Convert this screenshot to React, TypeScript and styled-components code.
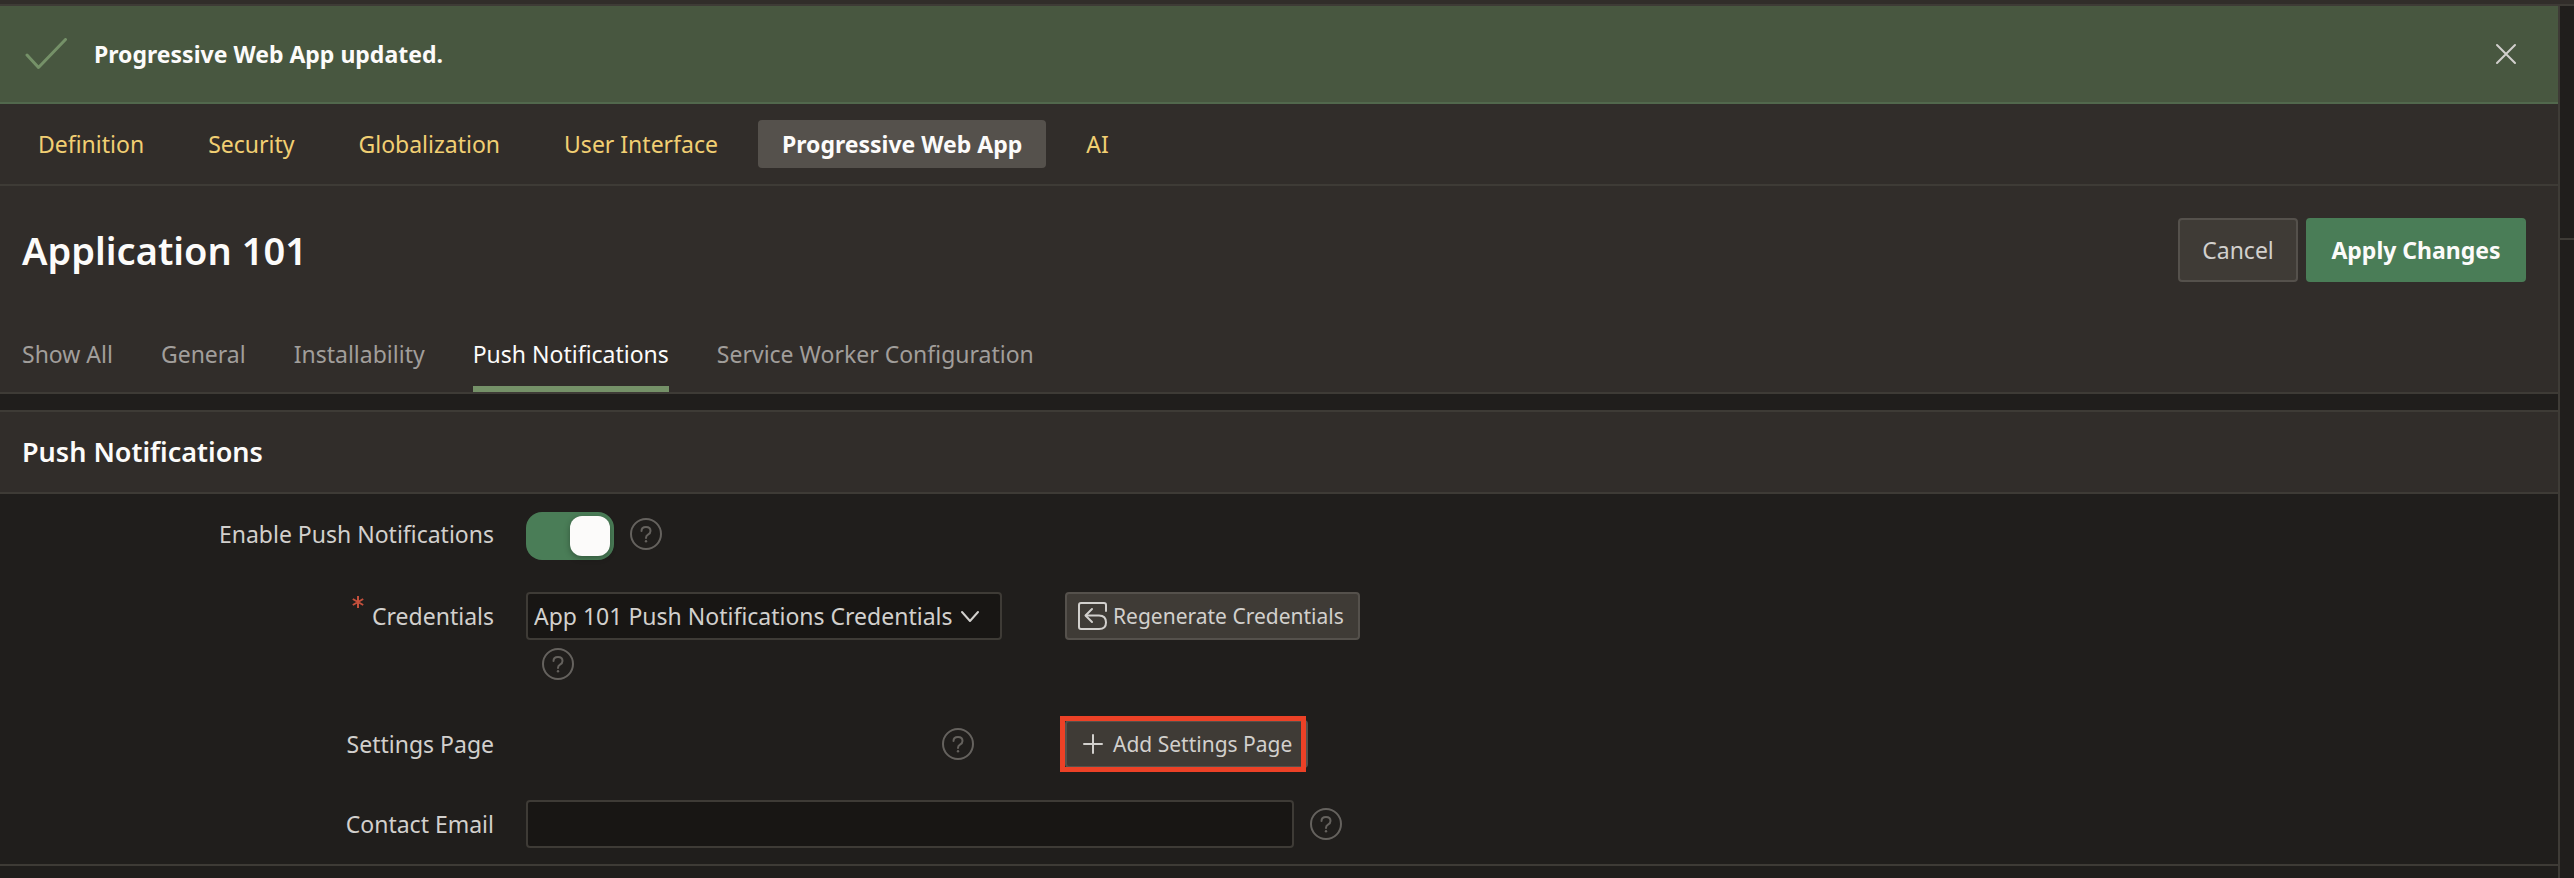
import React, { useState } from "react";
import styled, { createGlobalStyle, css } from "styled-components";

const color = {
  page: "#201e1c",
  panel: "#312d2a",
  line: "#3e3b36",
  field: "#181614",
  button: "#3f3b36",
  buttonLine: "#55514c",
  text: "#d2d0cd",
  strong: "#fcfbfa",
  muted: "#a19e9b",
  faint: "#65625e",
  green: "#4a7d57",
  leaf: "#759168",
  banner: "#485740",
  bannerLine: "#52684d",
  link: "#f1cf73",
  danger: "#c4503c",
  mark: "#ec4126",
};

const GlobalStyle = createGlobalStyle`
  *, *::before, *::after { box-sizing: border-box; }
  body {
    margin: 0;
    background: ${color.page};
    color: ${color.text};
    font-family: "Noto Sans", "Open Sans", sans-serif;
    font-size: 23px;
    line-height: 32px;
  }
  button, input, select { font: inherit; color: inherit; }
  h1, h2, p { margin: 0; }
`;

const Page = styled.div`
  display: flex;
  flex-direction: column;
  min-height: 100vh;
`;

const TopStrip = styled.div`
  height: 6px;
  background: ${color.panel};
  border-bottom: 2px solid ${color.line};
`;

const Body = styled.div`
  display: flex;
  flex: 1;
`;

const Main = styled.main`
  flex: 1;
  min-width: 0;
  border-right: 2px solid ${color.line};
`;

const SidePane = styled.aside`
  flex: 0 0 14px;
`;

const SideHeader = styled.div`
  height: 234px;
  border-bottom: 2px solid ${color.line};
`;

const Banner = styled.div`
  display: flex;
  align-items: center;
  padding: 32px 32px 32px 24px;
  background: ${color.banner};
  border-bottom: 2px solid ${color.bannerLine};
`;

const BannerText = styled.p`
  flex: 1;
  padding-left: 24px;
  color: ${color.strong};
  font-weight: 700;
`;

const IconButton = styled.button`
  display: flex;
  align-items: center;
  justify-content: center;
  width: 40px;
  height: 32px;
  padding: 0;
  border: 0;
  background: none;
  color: ${color.text};
`;

const SectionNav = styled.nav`
  display: flex;
  gap: 16px;
  padding: 16px 14px;
  background: ${color.panel};
  border-bottom: 2px solid ${color.line};
`;

const SectionLink = styled.a<{ $current?: boolean }>`
  padding: 8px 24px;
  border-radius: 4px;
  color: ${color.link};
  text-decoration: none;
  ${(p) =>
    p.$current &&
    css`
      background: ${color.buttonLine};
      color: ${color.strong};
      font-weight: 700;
    `}
`;

const Header = styled.header`
  background: ${color.panel};
  border-bottom: 2px solid ${color.line};
`;

const TitleBar = styled.div`
  display: flex;
  align-items: center;
  gap: 8px;
  padding: 32px 32px 40px 22px;
`;

const Title = styled.h1`
  flex: 1;
  color: ${color.strong};
  font-size: 38px;
  font-weight: 600;
  line-height: 48px;
`;

const ActionButton = styled.button<{ $primary?: boolean }>`
  min-width: ${(p) => (p.$primary ? 220 : 120)}px;
  height: 64px;
  padding: 0 22px;
  border: 2px solid ${(p) => (p.$primary ? color.green : color.buttonLine)};
  border-radius: 4px;
  background: ${(p) => (p.$primary ? color.green : color.button)};
  color: ${(p) => (p.$primary ? color.strong : color.text)};
  font-weight: ${(p) => (p.$primary ? 700 : 400)};
`;

const Tabs = styled.nav`
  display: flex;
  gap: 48px;
  padding: 0 22px;
`;

const Tab = styled.a<{ $current?: boolean }>`
  padding: 16px 0;
  border-bottom: 6px solid ${(p) => (p.$current ? color.leaf : "transparent")};
  color: ${(p) => (p.$current ? color.strong : color.muted)};
  text-decoration: none;
`;

const Region = styled.section`
  margin-top: 16px;
  border-top: 2px solid ${color.line};
  border-bottom: 2px solid ${color.line};
`;

const RegionTitle = styled.h2`
  padding: 22px;
  background: ${color.panel};
  border-bottom: 2px solid ${color.line};
  color: ${color.strong};
  font-size: 27px;
  font-weight: 600;
  line-height: 36px;
`;

const Form = styled.form`
  display: flex;
  flex-direction: column;
  gap: 32px;
  padding: 16px 0;
`;

const FieldRow = styled.div`
  display: flex;
  align-items: flex-start;
`;

const LabelCell = styled.div`
  display: flex;
  justify-content: flex-end;
  flex: 0 0 526px;
  padding: 8px 32px 8px 0;
`;

const Required = styled.span`
  display: flex;
  margin-top: -4px;
  padding-right: 8px;
`;

const FieldCell = styled.div<{ $column?: boolean }>`
  display: flex;
  flex-wrap: wrap;
  align-items: flex-start;
  flex: 0 0 auto;
  ${(p) =>
    p.$column &&
    css`
      flex-basis: 523px;
      margin-right: 16px;
    `}
`;

const Toggle = styled.input`
  appearance: none;
  display: flex;
  justify-content: flex-end;
  width: 88px;
  height: 48px;
  margin: 2px 0 0;
  padding: 4px;
  border-radius: 16px;
  background: ${color.green};
  &:not(:checked) {
    justify-content: flex-start;
    background: ${color.buttonLine};
  }
  &::before {
    content: "";
    width: 40px;
    height: 40px;
    border-radius: 12px;
    background: ${color.strong};
    box-shadow: 0 2px 6px rgba(0, 0, 0, 0.3);
  }
`;

const SelectBox = styled.div`
  position: relative;
`;

const Select = styled.select`
  appearance: none;
  display: block;
  width: 476px;
  height: 48px;
  padding: 0 48px 0 6px;
  border: 2px solid ${color.line};
  border-radius: 4px;
  background: ${color.field};
`;

const Chevron = styled.svg`
  position: absolute;
  top: 18px;
  right: 22px;
  pointer-events: none;
`;

const DisplayValue = styled.output`
  width: 400px;
  height: 48px;
`;

const TextInput = styled.input`
  width: 768px;
  height: 48px;
  padding: 0 14px;
  border: 2px solid ${color.line};
  border-radius: 4px;
  background: ${color.field};
`;

const HelpButton = styled.button`
  display: flex;
  margin: 8px 0 8px 16px;
  padding: 0;
  border: 0;
  background: none;
  color: ${color.faint};
`;

const SmallButton = styled.button`
  display: flex;
  align-items: center;
  gap: 4px;
  height: 48px;
  padding: 0 14px 0 10px;
  border: 2px solid ${color.buttonLine};
  border-radius: 4px;
  background: ${color.button};
  font-size: 21px;
`;

const Highlight = styled.div`
  position: relative;
  &::after {
    content: "";
    position: absolute;
    inset: -4px 2px -4px -5px;
    border: 5px solid ${color.mark};
    pointer-events: none;
  }
`;

function CheckIcon() {
  return (
    <svg width="46" height="32" viewBox="0 0 46 32" fill="none" stroke={color.leaf} strokeWidth="3" strokeLinecap="round" strokeLinejoin="round">
      <path d="M3 17 L14.500 29.500 L41.500 1.500" />
    </svg>
  );
}

function CloseIcon() {
  return (
    <svg width="24" height="24" viewBox="0 0 24 24" fill="none" stroke="currentColor" strokeWidth="2" strokeLinecap="round">
      <path d="M3 3 L21 21 M21 3 L3 21" />
    </svg>
  );
}

function AsteriskIcon() {
  return (
    <svg width="12" height="12" viewBox="0 0 12 12" fill="none" stroke={color.danger} strokeWidth="2" aria-hidden="true">
      <path d="M6 0 V12 M0.8 3 L11.2 9 M11.2 3 L0.8 9" />
    </svg>
  );
}

function RegenerateIcon() {
  return (
    <svg width="32" height="32" viewBox="0 0 32 32" fill="none" stroke="currentColor" strokeWidth="2" strokeLinecap="round" strokeLinejoin="round">
      <path d="M29 11 V5 Q29 3 27 3 H4 Q2 3 2 5 V27 Q2 29 4 29 H22 Q29 29 29 22.500 Q29 15.500 22 15.500 H9" />
      <path d="M15 9 L8.500 15.500 L15 22" />
    </svg>
  );
}

function PlusIcon() {
  return (
    <svg width="32" height="32" viewBox="0 0 32 32" fill="none" stroke="currentColor" strokeWidth="2" strokeLinecap="round">
      <path d="M16 7 V25 M7 16 H25" />
    </svg>
  );
}

function Help({ topic }: { topic: string }) {
  return (
    <HelpButton type="button" aria-label={`Help: ${topic}`}>
      <svg width="32" height="32" viewBox="0 0 32 32" fill="none" stroke="currentColor" strokeWidth="2">
        <circle cx="16" cy="16" r="15" />
        <path d="M11.500 13 Q11.500 9 16 9 Q20.500 9 20.500 13 Q20.500 15.300 18 16.600 Q16 17.700 16 20" strokeLinecap="round" />
        <circle cx="16" cy="23.300" r="1.200" fill="currentColor" stroke="none" />
      </svg>
    </HelpButton>
  );
}

const sections = ["Definition", "Security", "Globalization", "User Interface", "Progressive Web App", "AI"];
const tabs = ["Show All", "General", "Installability", "Push Notifications", "Service Worker Configuration"];

export default function App() {
  const [enabled, setEnabled] = useState(true);
  const [email, setEmail] = useState("");

  return (
    <>
      <GlobalStyle />
      <Page>
        <TopStrip />
        <Body>
          <Main>
            <Banner role="status">
              <CheckIcon />
              <BannerText>Progressive Web App updated.</BannerText>
              <IconButton type="button" aria-label="Close">
                <CloseIcon />
              </IconButton>
            </Banner>

            <SectionNav>
              {sections.map((name) => (
                <SectionLink key={name} href="#" $current={name === "Progressive Web App"}>
                  {name}
                </SectionLink>
              ))}
            </SectionNav>

            <Header>
              <TitleBar>
                <Title>Application 101</Title>
                <ActionButton type="button">Cancel</ActionButton>
                <ActionButton type="button" $primary>
                  Apply Changes
                </ActionButton>
              </TitleBar>
              <Tabs>
                {tabs.map((name) => (
                  <Tab key={name} href="#" $current={name === "Push Notifications"}>
                    {name}
                  </Tab>
                ))}
              </Tabs>
            </Header>

            <Region>
              <RegionTitle>Push Notifications</RegionTitle>
              <Form>
                <FieldRow>
                  <LabelCell>
                    <label htmlFor="enable-push">Enable Push Notifications</label>
                  </LabelCell>
                  <FieldCell>
                    <Toggle
                      id="enable-push"
                      type="checkbox"
                      checked={enabled}
                      onChange={(e) => setEnabled(e.target.checked)}
                    />
                    <Help topic="Enable Push Notifications" />
                  </FieldCell>
                </FieldRow>

                <FieldRow>
                  <LabelCell>
                    <Required>
                      <AsteriskIcon />
                    </Required>
                    <label htmlFor="credentials">Credentials</label>
                  </LabelCell>
                  <FieldCell $column>
                    <SelectBox>
                      <Select id="credentials">
                        <option>App 101 Push Notifications Credentials</option>
                      </Select>
                      <Chevron width="20" height="14" viewBox="0 0 20 14" fill="none" stroke="currentColor" strokeWidth="2" strokeLinecap="round" strokeLinejoin="round">
                        <path d="M2 2 L10 11 L18 2" />
                      </Chevron>
                    </SelectBox>
                    <Help topic="Credentials" />
                  </FieldCell>
                  <SmallButton type="button">
                    <RegenerateIcon />
                    Regenerate Credentials
                  </SmallButton>
                </FieldRow>

                <FieldRow>
                  <LabelCell>
                    <label htmlFor="settings-page">Settings Page</label>
                  </LabelCell>
                  <FieldCell $column>
                    <DisplayValue id="settings-page" />
                    <Help topic="Settings Page" />
                  </FieldCell>
                  <Highlight>
                    <SmallButton type="button">
                      <PlusIcon />
                      Add Settings Page
                    </SmallButton>
                  </Highlight>
                </FieldRow>

                <FieldRow>
                  <LabelCell>
                    <label htmlFor="contact-email">Contact Email</label>
                  </LabelCell>
                  <FieldCell>
                    <TextInput
                      id="contact-email"
                      type="email"
                      value={email}
                      onChange={(e) => setEmail(e.target.value)}
                    />
                    <Help topic="Contact Email" />
                  </FieldCell>
                </FieldRow>
              </Form>
            </Region>
          </Main>
          <SidePane>
            <SideHeader />
          </SidePane>
        </Body>
      </Page>
    </>
  );
}
